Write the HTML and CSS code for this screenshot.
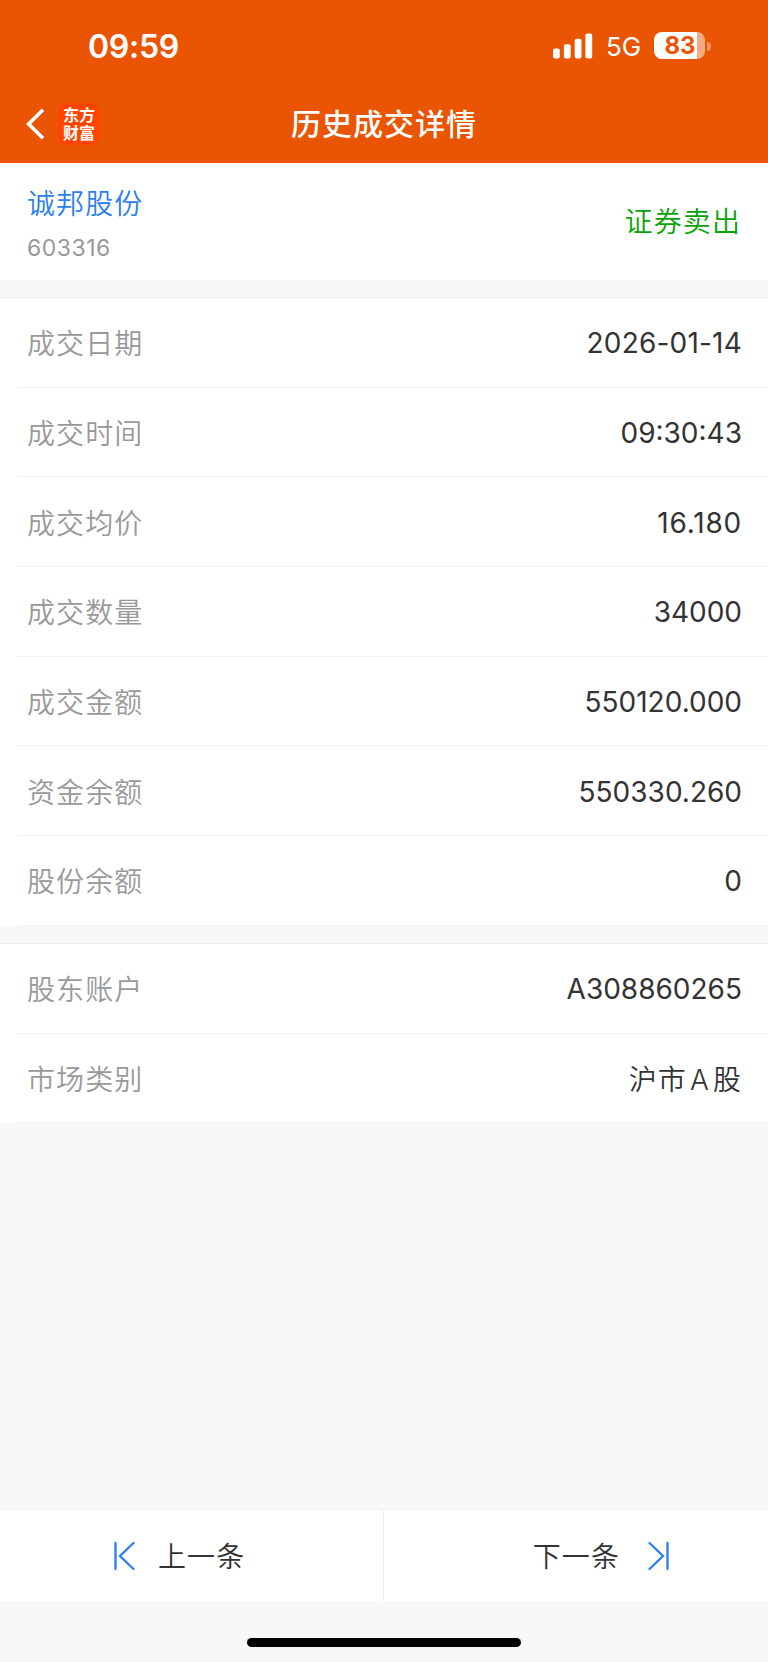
FILE: index.html
```html
<!DOCTYPE html>
<html lang="zh-CN">
<head>
    <meta charset="UTF-8">
    <meta name="viewport" content="width=device-width, initial-scale=1.0">
    <title>历史成交详情</title>
    <link rel="stylesheet" href="styles.css">
</head>
<body>
    <div class="page">
        <header class="header">
            <div class="status-bar">
                <span class="time">09:59</span>
                <div class="status-icons">
                    <svg class="signal" width="40" height="26" viewBox="0 0 40 26" fill="#fff">
                        <rect x="0" y="15.5" width="6.8" height="10" rx="2"/>
                        <rect x="10.9" y="11.3" width="6.8" height="14.2" rx="2"/>
                        <rect x="21.7" y="5.8" width="6.8" height="19.7" rx="2"/>
                        <rect x="32.4" y="0.6" width="6.8" height="24.9" rx="2"/>
                    </svg>
                    <span class="network">5G</span>
                    <div class="battery"><span>83</span></div>
                    <div class="battery-tip"></div>
                </div>
            </div>
            <div class="nav-bar">
                <div class="nav-left">
                    <svg width="19" height="32" viewBox="0 0 19 32" fill="none" stroke="#fff" stroke-width="3.6">
                        <path d="M17 1.8L2.6 16L17 30.2"/>
                    </svg>
                    <div class="logo">东方<br>财富</div>
                </div>
                <h1>历史成交详情</h1>
            </div>
        </header>

        <section class="stock">
            <div>
                <div class="stock-name">诚邦股份</div>
                <div class="stock-code">603316</div>
            </div>
            <div class="side">证券卖出</div>
        </section>

        <section class="list">
            <div class="row"><span class="label">成交日期</span><span class="value date">2026-01-14</span></div>
            <div class="row"><span class="label">成交时间</span><span class="value">09:30:43</span></div>
            <div class="row"><span class="label">成交均价</span><span class="value price">16.180</span></div>
            <div class="row"><span class="label">成交数量</span><span class="value">34000</span></div>
            <div class="row"><span class="label">成交金额</span><span class="value">550120.000</span></div>
            <div class="row"><span class="label">资金余额</span><span class="value">550330.260</span></div>
            <div class="row"><span class="label">股份余额</span><span class="value">0</span></div>
        </section>

        <section class="list account">
            <div class="row"><span class="label">股东账户</span><span class="value">A308860265</span></div>
            <div class="row"><span class="label">市场类别</span><span class="value cjk">沪市<i>A</i>股</span></div>
        </section>

        <footer class="footer">
            <div class="pager">
                <div class="pager-btn prev">
                    <svg width="22" height="30" viewBox="0 0 22 30" fill="none" stroke="#2b7fea" stroke-width="2.3" stroke-linecap="round">
                        <path d="M2.5 2V28M20.5 2L7 15L20.5 28"/>
                    </svg>
                    <span>上一条</span>
                </div>
                <div class="pager-btn next">
                    <span>下一条</span>
                    <svg width="22" height="30" viewBox="0 0 22 30" fill="none" stroke="#2b7fea" stroke-width="2.3" stroke-linecap="round">
                        <path d="M20.5 2V28M2.5 2L16 15L2.5 28"/>
                    </svg>
                </div>
            </div>
            <div class="home-indicator"></div>
        </footer>
    </div>
</body>
</html>
```

FILE: styles.css
```css
* {
    box-sizing: border-box;
}

body {
    margin: 0;
    font-family: Inter, "Noto Sans CJK SC", sans-serif;
    background-color: #f7f8fa;
    color: #333;
}

.page {
    display: flex;
    flex-direction: column;
    height: 1662px;
}

.header {
    height: 163px;
    background-color: #ea5504;
    color: #fff;
}

.status-bar {
    display: flex;
    justify-content: space-between;
    height: 86px;
    padding: 6px 57px 0 88px;
    align-items: center;
}

.time {
    font-size: 32px;
    font-weight: 600;
    letter-spacing: -0.3px;
}

.status-icons {
    display: flex;
    align-items: center;
}

.network {
    margin-left: 13px;
    padding-top: 1px;
    font-size: 26px;
    width: 48px;
}

.battery {
    width: 51px;
    height: 27px;
    margin-top: -1px;
    padding-left: 1px;
    border-radius: 8px;
    background: linear-gradient(to right, #fff 43px, #f5ab84 43px);
    color: #ea5504;
    font-size: 24px;
    font-weight: 700;
    line-height: 27px;
    text-align: center;
}

.battery-tip {
    width: 4px;
    height: 9px;
    margin-left: 2px;
    border-radius: 0 5px 5px 0;
    background-color: #f2955f;
}

.nav-bar {
    display: grid;
    grid-template-columns: 1fr auto 1fr;
    align-items: center;
    height: 76px;
    padding: 0 26px;
}

.nav-left {
    display: flex;
    align-items: center;
    gap: 13px;
}

.logo {
    width: 42px;
    height: 42px;
    padding-top: 2px;
    border-radius: 9px;
    background-color: #ff4400;
    font-family: "Noto Sans CJK SC", sans-serif;
    font-size: 16px;
    font-weight: 700;
    line-height: 18px;
    text-align: center;
}

h1 {
    margin: -4px 0 0;
    font-size: 30px;
    font-weight: 500;
    letter-spacing: 1px;
}

.stock {
    display: flex;
    justify-content: space-between;
    align-items: center;
    height: 117px;
    padding: 0 27px;
    background-color: #fff;
}

.stock-name {
    margin-top: 4px;
    color: #2b7fea;
    font-size: 28px;
    font-weight: 350;
    line-height: 40px;
    letter-spacing: 1.1px;
}

.stock-code {
    margin-top: 9px;
    color: #999;
    font-size: 23px;
    line-height: 30px;
    letter-spacing: 0.5px;
}

.side {
    margin-top: -4px;
    color: #09a309;
    font-size: 28px;
    font-weight: 350;
    letter-spacing: 1.1px;
}

.list {
    margin-top: 17px;
    border-top: 1px solid #edeef0;
    background-color: #fff;
}

.row {
    display: flex;
    justify-content: space-between;
    align-items: center;
    height: 89.7px;
    margin-left: 18px;
    padding: 0 26px 0 9px;
    border-bottom: 1px solid #f2f2f3;
    font-size: 28px;
}

.label {
    color: #999;
    font-weight: 350;
    letter-spacing: 1.1px;
}

.value {
    padding-top: 2px;
}

.value.date {
    letter-spacing: 0.2px;
}

.value.price {
    letter-spacing: 0.8px;
}

.value.cjk {
    padding-top: 0;
    font-weight: 350;
    letter-spacing: 1.1px;
}

.value i {
    margin: 0 3px;
    font-style: normal;
}

.footer {
    height: 153px;
    margin-top: auto;
}

.pager {
    display: grid;
    grid-template-columns: 1fr 1fr;
    height: 92px;
    border-top: 1px solid #f1f0f2;
    background-color: #fff;
}

.pager-btn {
    display: flex;
    align-items: center;
    font-size: 28px;
    font-weight: 350;
    letter-spacing: 1.1px;
}

.pager-btn span {
    margin-top: -2px;
}

.prev {
    padding-left: 113px;
    gap: 23px;
    border-right: 1px solid #f1f0f2;
}

.next {
    justify-content: flex-end;
    padding-right: 99px;
    gap: 27px;
}

.home-indicator {
    width: 274px;
    height: 9px;
    margin: 37px auto 0;
    border-radius: 5px;
    background-color: #000;
}
```
